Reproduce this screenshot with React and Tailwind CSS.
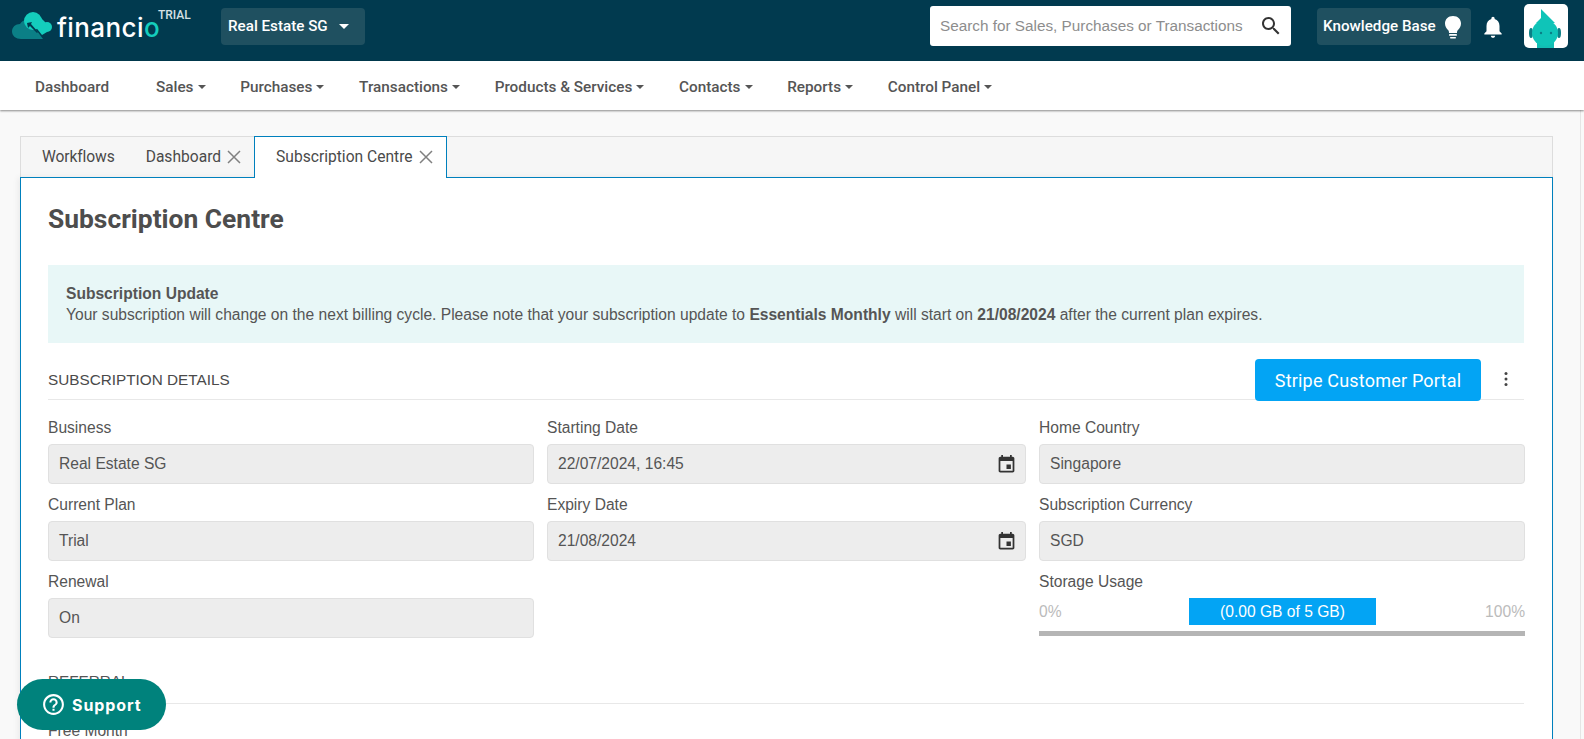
import React from "react";

const navItems = [
  { label: "Sales", ml: "ml-[47px]" },
  { label: "Purchases", ml: "ml-[34.700px]" },
  { label: "Transactions", ml: "ml-[34.700px]" },
  { label: "Products & Services", ml: "ml-[34.700px]" },
  { label: "Contacts", ml: "ml-[34.700px]" },
  { label: "Reports", ml: "ml-[34.700px]" },
  { label: "Control Panel", ml: "ml-[34.700px]" },
];

const Logo = () => (
  <div className="flex items-center w-[146px] h-[40px]">
    <svg width="44" height="30" viewBox="0 0 44 30" className="shrink-0">
      <path d="M9 27C4 27 0 24 0 19.500 0 15 3.500 12 8 12c2-3 5-5 9-4l14 19z" fill="#0b7f86" />
      <circle cx="21" cy="9" r="9" fill="#14cdbd" />
      <circle cx="35" cy="15" r="5" fill="#14cdbd" />
      <path d="M24 1l9 9 2 10-5 3-8-10z" fill="#14cdbd" />
      <path d="M15 11l5-1-1 2 7 8-1 1-7-7-2 2z" fill="#013a4f" />
    </svg>
    <span className="font-['Inter',sans-serif] font-medium text-[26px] leading-none tracking-[0.4px] text-white ml-[1px] mt-[2px]">
      financi<span className="text-[#14cdbd]">o</span>
    </span>
  </div>
);

const Avatar = () => (
  <div className="ml-[18px] w-[44px] h-[44px] rounded-[5px] bg-white overflow-hidden">
    <svg width="44" height="44" viewBox="0 0 44 44">
      <rect x="13" y="38" width="17" height="6" fill="#13bdb4" />
      <ellipse cx="7" cy="29" rx="2" ry="5" fill="#0a7f86" />
      <ellipse cx="35" cy="29" rx="2" ry="5" fill="#0a7f86" />
      <circle cx="21" cy="29" r="13" fill="#0fc4b8" />
      <path d="M17 5l14 14H12l5-5z" fill="#0fc4b8" />
      <circle cx="17" cy="29" r="1.200" fill="#0a7f86" />
      <circle cx="27" cy="29" r="1.200" fill="#0a7f86" />
    </svg>
  </div>
);

const Header = () => (
  <header className="h-[61px] shrink-0 bg-[#013a4f] flex items-start font-['Roboto',sans-serif]">
    <div className="ml-[12px] mt-[7px]">
      <Logo />
    </div>
    <span className="mt-[6px] text-[12px] font-medium text-[#d5e0e4] w-[34px]">TRIAL</span>
    <button className="ml-[29px] mt-[8px] w-[144px] h-[37px] rounded-[4px] bg-[#1f5060] flex items-center pl-[7px] text-[15.200px] font-medium text-white">
      Real Estate SG
      <span className="ml-[11px] w-0 h-0 border-x-[5px] border-x-transparent border-t-[5px] border-t-white" />
    </button>
    <div className="ml-auto mt-[6px] w-[361px] h-[40px] rounded-[3px] bg-white flex items-center pl-[10px] pr-[8px]">
      <span className="flex-1 text-[15.300px] text-[#8d8d8d] font-['Liberation_Sans',sans-serif] whitespace-nowrap">
        Search for Sales, Purchases or Transactions
      </span>
      <svg width="24" height="24" viewBox="0 0 24 24" fill="#333">
        <path d="M15.500 14h-.79l-.28-.27C15.410 12.590 16 11.110 16 9.500 16 5.910 13.090 3 9.500 3S3 5.910 3 9.500 5.910 16 9.500 16c1.610 0 3.090-.59 4.230-1.570l.27.28v.79l5 4.990L20.490 19l-4.990-5zm-6 0C7.010 14 5 11.990 5 9.500S7.010 5 9.500 5 14 7.010 14 9.500 11.990 14 9.500 14z" />
      </svg>
    </div>
    <button className="ml-[26px] mt-[8px] w-[154px] h-[37px] rounded-[4px] bg-[#1f5060] flex items-center pl-[6px] text-[15.200px] font-medium text-white whitespace-nowrap">
      Knowledge Base
      <svg width="20" height="24" viewBox="0 0 20 24" fill="white" className="ml-[7px]">
        <path d="M10 1C5 1 2 4.500 2 8.500c0 3 1.500 5 3 6.500.8.800 1 1.500 1 3h8c0-1.500.2-2.200 1-3 1.500-1.500 3-3.500 3-6.500C18 4.500 15 1 10 1z" />
        <rect x="6" y="19" width="8" height="1.800" rx=".9" />
        <rect x="7" y="22" width="6" height="1.500" rx=".7" />
      </svg>
    </button>
    <svg width="26" height="26" viewBox="0 0 24 24" fill="white" className="ml-[9px] mt-[14px]">
      <path d="M12 22c1.100 0 2-.9 2-2h-4c0 1.100.9 2 2 2zm6-6v-5c0-3.070-1.630-5.640-4.500-6.320V4c0-.83-.67-1.500-1.500-1.500s-1.500.67-1.500 1.500v.68C7.640 5.360 6 7.920 6 11v5l-2 2v1h16v-1l-2-2z" />
    </svg>
    <div className="mt-[4px] mr-[16px]">
      <Avatar />
    </div>
  </header>
);

const NavBar = () => (
  <nav className="relative z-10 h-[49px] shrink-0 bg-white shadow-[0_1px_2px_rgba(0,0,0,0.45)] flex items-center pl-[35px] pt-[3px] font-['Roboto',sans-serif] text-[15.300px] font-medium text-[#555]">
    <span>Dashboard</span>
    {navItems.map((item) => (
      <span key={item.label} className={`${item.ml} flex items-center`}>
        {item.label}
        <span className="ml-[4px] w-0 h-0 border-x-[4.500px] border-x-transparent border-t-[4.500px] border-t-[#555]" />
      </span>
    ))}
  </nav>
);

const CloseX = () => (
  <svg width="14" height="14" viewBox="0 0 14 14" stroke="#808080" strokeWidth="1.500" className="ml-[6px] -mt-[2px] shrink-0">
    <path d="M1 1l12 12M13 1L1 13" />
  </svg>
);

const Tabs = () => (
  <div className="h-[41px] shrink-0 bg-[#f6f6f6] border border-[#ddd] border-b-0 flex font-['Roboto',sans-serif] text-[15.600px] text-[#4a4a4a]">
    <div className="pl-[21px] pt-[1px] flex items-center tracking-[-0.1px]">Workflows</div>
    <div className="ml-[31px] pt-[1px] flex items-center">
      Dashboard
      <CloseX />
    </div>
    <div className="relative z-10 ml-[13px] -mt-[1px] h-[42px] w-[193px] pt-[1px] bg-white border border-[#0080bd] border-b-0 flex items-center pl-[21px]">
      Subscription Centre
      <CloseX />
    </div>
  </div>
);

const CalendarIcon = () => (
  <svg width="21" height="21" viewBox="0 0 24 24" fill="#333">
    <path d="M17 12h-5v5h5v-5zM16 1v2H8V1H6v2H5c-1.110 0-1.990.9-1.990 2L3 19c0 1.100.89 2 2 2h14c1.100 0 2-.9 2-2V5c0-1.100-.9-2-2-2h-1V1h-2zm3 18H5V8h14v11z" />
  </svg>
);

const Field = ({ label, value, icon }) => (
  <div>
    <div className="h-[25px] text-[15.600px] leading-[18px] text-[#555] whitespace-nowrap">{label}</div>
    <div className="h-[40px] rounded-[4px] bg-[#ededed] border border-[#e0e0e0] flex items-center justify-between pl-[10px] pr-[8px] text-[15.600px] text-[#555]">
      {value}
      {icon && <CalendarIcon />}
    </div>
  </div>
);

const StorageUsage = () => (
  <div>
    <div className="h-[25px] text-[15.600px] leading-[18px] text-[#555]">Storage Usage</div>
    <div className="relative h-[27px] flex items-center justify-between text-[15.600px] text-[#bbb]">
      <span>0%</span>
      <span className="absolute left-[150px] w-[187px] h-[27px] bg-[#03a4f4] text-white flex items-center justify-center">
        (0.00 GB of 5 GB)
      </span>
      <span>100%</span>
    </div>
    <div className="mt-[6px] h-[5px] bg-[#b5b5b5]" />
  </div>
);

const Panel = () => (
  <div className="h-[700px] shrink-0 bg-white border border-[#0080bd] pl-[27px] pr-[28px] font-['Liberation_Sans',sans-serif] text-[#555] overflow-hidden shadow-[-2px_0_6px_rgba(0,0,0,0.06)]">
    <h1 className="mt-[23px] h-[36px] font-['Roboto',sans-serif] font-bold text-[26.400px] leading-[36px] text-[#4d4d4d]">
      Subscription Centre
    </h1>
    <div className="mt-[28px] h-[78px] bg-[#e8f7f7] pl-[18px] pt-[18px] text-[15.600px] leading-[21px]">
      <div className="font-bold">Subscription Update</div>
      <div>
        Your subscription will change on the next billing cycle. Please note that your subscription update to{" "}
        <b>Essentials Monthly</b> will start on <b>21/08/2024</b> after the current plan expires.
      </div>
    </div>
    <div className="mt-[16px] h-[41px] border-b border-[#e8e8e8] flex items-start justify-between">
      <span className="mt-[12px] text-[15.300px] text-[#4a4a4a] leading-[18px]">SUBSCRIPTION DETAILS</span>
      <div className="flex items-start">
        <button className="h-[42px] w-[226px] rounded-[4px] bg-[#03a4f4] text-white font-['Roboto',sans-serif] text-[18px] tracking-[0.2px]">
          Stripe Customer Portal
        </button>
        <svg width="24" height="24" viewBox="0 0 24 24" fill="#444" className="ml-[13px] mt-[8px] mr-[6px]">
          <circle cx="12" cy="6.500" r="1.500" />
          <circle cx="12" cy="12" r="1.500" />
          <circle cx="12" cy="17.500" r="1.500" />
        </svg>
      </div>
    </div>
    <div className="mt-[19px] grid grid-cols-[486px_479px_486px] gap-x-[13px] gap-y-[12px]">
      <Field label="Business" value="Real Estate SG" />
      <Field label="Starting Date" value="22/07/2024, 16:45" icon />
      <Field label="Home Country" value="Singapore" />
      <Field label="Current Plan" value="Trial" />
      <Field label="Expiry Date" value="21/08/2024" icon />
      <Field label="Subscription Currency" value="SGD" />
      <Field label="Renewal" value="On" />
      <div />
      <StorageUsage />
    </div>
    <div className="mt-[34px] h-[32px] border-b border-[#e8e8e8] text-[15.300px] leading-[18px]">REFERRAL</div>
    <div className="mt-[18px] text-[15.600px] leading-[18px] text-[#555]">Free Month</div>
  </div>
);

const SupportButton = () => (
  <button className="absolute left-[17px] top-[679px] z-20 w-[149px] h-[51px] rounded-[26px] bg-[#00827c] flex items-center pl-[24px] font-['Inter',sans-serif] font-bold text-[16px] tracking-[0.9px] text-white">
    <svg width="25" height="25" viewBox="0 0 24 24" fill="white" className="mr-[6px] shrink-0">
      <path d="M11 18h2v-2h-2v2zm1-16C6.480 2 2 6.480 2 12s4.480 10 10 10 10-4.480 10-10S17.520 2 12 2zm0 18c-4.410 0-8-3.590-8-8s3.590-8 8-8 8 3.590 8 8-3.590 8-8 8zm0-14c-2.210 0-4 1.790-4 4h2c0-1.100.9-2 2-2s2 .9 2 2c0 2-3 1.750-3 5h2c0-2.250 3-2.500 3-5 0-2.210-1.790-4-4-4z" />
    </svg>
    Support
  </button>
);

export default function App() {
  return (
    <div className="relative h-[739px] overflow-hidden flex flex-col bg-[#f9f9f9]">
      <Header />
      <NavBar />
      <div className="flex-1 flex min-h-0">
        <div className="flex-1 flex flex-col min-w-0 pl-[20px] pr-[27px] pt-[26px]">
          <Tabs />
          <Panel />
        </div>
        <div className="w-[4px] border-l border-[#e5e5e5]" />
      </div>
      <SupportButton />
    </div>
  );
}
